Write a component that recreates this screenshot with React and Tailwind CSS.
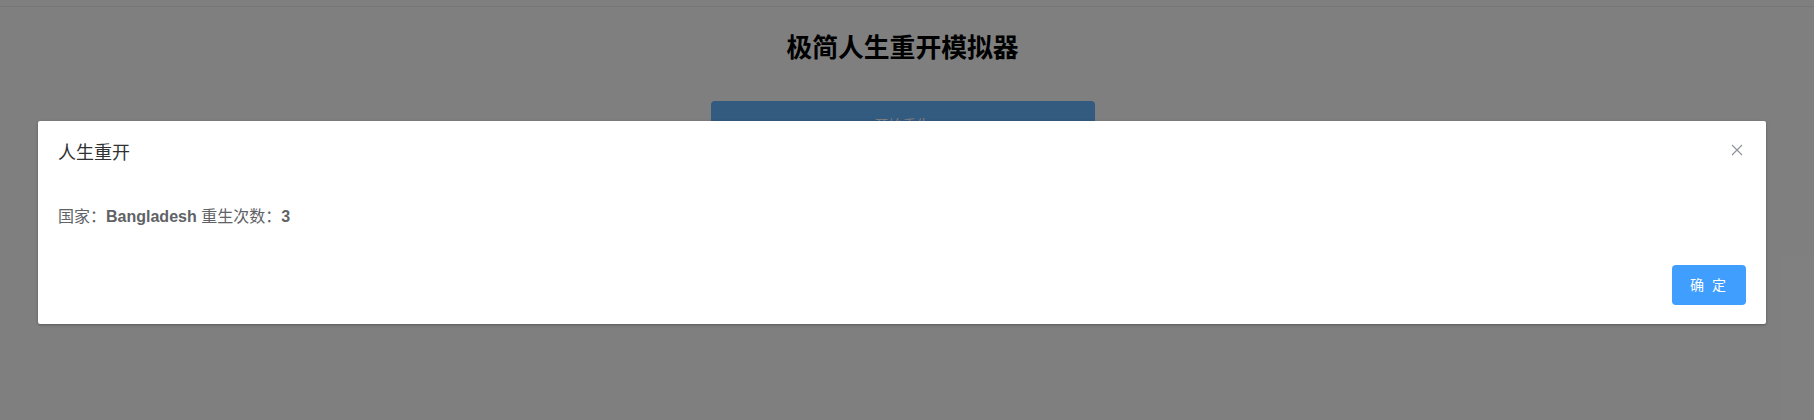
import React from 'react';

const CloseIcon = () => (
    <svg width="12" height="12" viewBox="0 0 12 12" className="block">
        <path d="M1 1 L11 11 M11 1 L1 11" stroke="#909399" strokeWidth="1.2" fill="none" />
    </svg>
);

const App = () => {
    return (
        <div className="relative h-[420px] w-full overflow-hidden bg-white font-['Liberation_Sans','Noto_Sans_CJK_SC',sans-serif]">
            {/* page underneath */}
            <div className="border-b border-[#eeeeee] h-[7px]" />
            <div className="flex flex-col items-center pr-[9px]">
                <h1 className="mt-[21px] text-[25.8px] font-bold leading-[40px] text-black">极简人生重开模拟器</h1>
                <button className="mt-[33px] w-[384px] h-[48px] rounded-[4px] bg-[#66b4ff] text-white text-[14px]">
                    开始重生
                </button>
            </div>

            {/* overlay */}
            <div className="absolute inset-0 bg-black/50" />

            {/* dialog */}
            <div className="absolute left-[38px] top-[121px] w-[1728px] rounded-[2px] bg-white shadow-[0_1px_3px_rgba(0,0,0,0.3)]">
                <div className="relative px-[20px] pt-[20px] pb-[10px]">
                    <span className="text-[18px] leading-[24px] text-[#303133]">人生重开</span>
                    <button className="absolute right-[23px] top-[23px] p-0">
                        <CloseIcon />
                    </button>
                </div>
                <div className="px-[20px] py-[30px] text-[16px] leading-[22px] text-[#606266]">
                    国家：<b>Bangladesh</b> 重生次数：<b>3</b>
                </div>
                <div className="flex justify-end px-[20px] pt-[7px] pb-[19px]">
                    <button className="h-[40px] w-[74px] rounded-[4px] bg-[#409eff] text-[14px] text-white tracking-[2px]">
                        确 定
                    </button>
                </div>
            </div>
        </div>
    );
};

export default App;
